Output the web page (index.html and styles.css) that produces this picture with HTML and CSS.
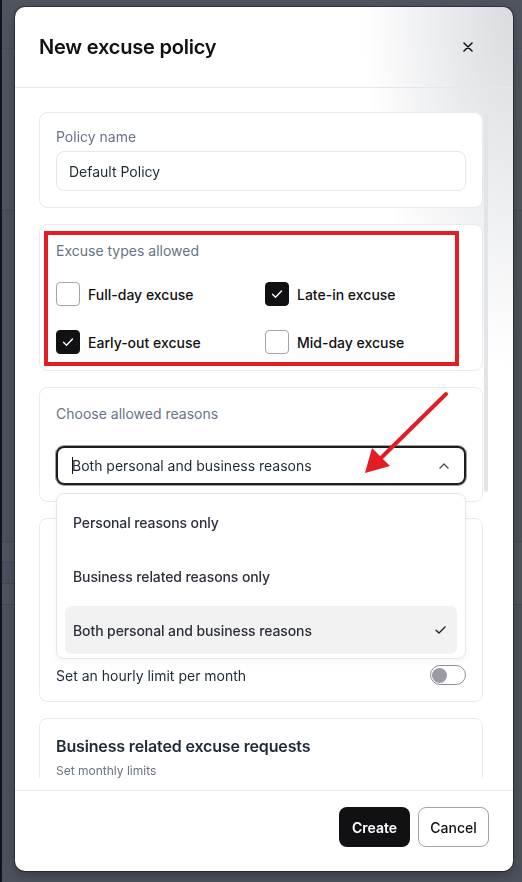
FILE: index.html
```html
<!DOCTYPE html>
<html lang="en">
<head>
    <meta charset="UTF-8">
    <meta name="viewport" content="width=device-width, initial-scale=1.0">
    <title>New excuse policy</title>
    <link rel="stylesheet" href="styles.css">
</head>
<body>
    <div class="page">
        <header class="topbar"></header>
        <section class="page-intro"></section>
        <section class="page-table">
            <div class="page-row"><span class="page-chip"></span></div>
        </section>
    </div>

    <div class="overlay">
        <div class="modal">
            <div class="modal-header">
                <h2 class="modal-title">New excuse policy</h2>
                <button class="icon-btn" aria-label="Close">
                    <svg width="10" height="10" viewBox="0 0 10 10"><path d="M1 1l8 8M9 1l-8 8" stroke="#111" stroke-width="1.5" stroke-linecap="round"/></svg>
                </button>
            </div>

            <div class="modal-body">
                <div class="scroll">
                    <div class="card">
                        <label class="field-label field-label--tight">Policy name</label>
                        <div class="text-input">Default Policy</div>
                    </div>

                    <div class="card card--annotated">
                        <div class="field-label">Excuse types allowed</div>
                        <div class="type-grid">
                            <label class="check-item"><span class="checkbox"></span>Full-day excuse</label>
                            <label class="check-item">
                                <span class="checkbox is-checked"><svg width="24" height="24" viewBox="0 0 24 24"><path d="M7.5 12.3l3 3 6-6.3" fill="none" stroke="#fff" stroke-width="1.4" stroke-linecap="round" stroke-linejoin="round"/></svg></span>
                                Late-in excuse
                            </label>
                            <label class="check-item">
                                <span class="checkbox is-checked"><svg width="24" height="24" viewBox="0 0 24 24"><path d="M7.5 12.3l3 3 6-6.3" fill="none" stroke="#fff" stroke-width="1.4" stroke-linecap="round" stroke-linejoin="round"/></svg></span>
                                Early-out excuse
                            </label>
                            <label class="check-item"><span class="checkbox"></span>Mid-day excuse</label>
                        </div>
                        <div class="annotation-box"></div>
                    </div>

                    <div class="card card--reasons">
                        <div class="field-label field-label--spaced">Choose allowed reasons</div>
                        <div class="select-wrap">
                            <div class="select">
                                <span class="select-value"><span class="caret"></span>Both personal and business reasons</span>
                                <svg width="10" height="6" viewBox="0 0 10 6"><path d="M1 5l4-4 4 4" fill="none" stroke="#4b5563" stroke-width="1.4" stroke-linecap="round" stroke-linejoin="round"/></svg>
                            </div>
                            <div class="dropdown">
                                <div class="option">Personal reasons only</div>
                                <div class="option">Business related reasons only</div>
                                <div class="option is-selected">
                                    Both personal and business reasons
                                    <svg width="11" height="8" viewBox="0 0 11 8"><path d="M1 4.2l3 2.8 6-6" fill="none" stroke="#222" stroke-width="1.4" stroke-linecap="round" stroke-linejoin="round"/></svg>
                                </div>
                            </div>
                        </div>
                        <svg class="annotation-arrow" width="90" height="90" viewBox="0 0 90 90">
                            <path d="M84 4L20 67" stroke="#e31d24" stroke-width="4" stroke-linecap="round"/>
                            <path d="M3 83L10 58L28 76Z" fill="#e31d24"/>
                        </svg>
                    </div>

                    <div class="card">
                        <div class="limit-spacer"></div>
                        <div class="toggle-row">Set an hourly limit per month<span class="switch"></span></div>
                    </div>

                    <div class="card">
                        <div class="card-title">Business related excuse requests</div>
                        <div class="card-sub">Set monthly limits</div>
                    </div>
                </div>
                <div class="scroll-thumb"></div>
            </div>

            <div class="modal-footer">
                <button class="btn btn-primary">Create</button>
                <button class="btn btn-outline">Cancel</button>
            </div>
        </div>
    </div>
</body>
</html>
```

FILE: styles.css
```css
* {
    box-sizing: border-box;
}
body {
    margin: 0;
    font-family: Inter, "Noto Sans", sans-serif;
    color: #111;
}

/* page behind the dialog */
.page {
    min-height: 100vh;
    background: #f3f4f6;
    border-left: 2px solid #0b0b0b;
}
.topbar {
    height: 49px;
    background: #fff;
    border-bottom: 1px solid #e5e7eb;
}
.page-intro {
    height: 162px;
    background: #fff;
    border-bottom: 1px solid #d1d5db;
}
.page-table {
    margin-top: 330px;
}
.page-row {
    height: 64px;
    background: #fff;
    border-top: 1px solid #d1d5db;
    border-bottom: 1px solid #d1d5db;
    display: flex;
    align-items: center;
}
.page-chip {
    width: 14px;
    height: 22px;
    background: #eef0f8;
    border: 1px solid #c5cadf;
    border-left: 0;
}

/* dialog */
.overlay {
    position: fixed;
    inset: 0;
    background: rgba(17, 24, 39, 0.74);
    display: flex;
    align-items: flex-start;
}
.modal {
    margin: 7px 0 0 15px;
    width: 498px;
    border-radius: 10px;
    background: radial-gradient(ellipse 150px 360px at 100% 0, #d9dbdf, rgba(255, 255, 255, 0)), #fff;
    box-shadow: 0 0 0 1px rgba(0, 0, 0, 0.35), 0 4px 12px rgba(0, 0, 0, 0.3);
    display: flex;
    flex-direction: column;
}
.modal-header {
    height: 81px;
    padding: 0 33px 0 24px;
    display: flex;
    align-items: center;
    justify-content: space-between;
    border-bottom: 1px solid #e5e7eb;
}
.modal-title {
    margin: 0;
    font-size: 20px;
    font-weight: 600;
    letter-spacing: -0.2px;
    color: #111;
}
.icon-btn {
    width: 24px;
    height: 24px;
    padding: 0;
    border: 0;
    background: none;
    display: flex;
    align-items: center;
    justify-content: center;
}
.modal-body {
    position: relative;
    padding: 24px 24px 12px;
}
.scroll {
    height: 666px;
    overflow: hidden;
    padding-right: 6px;
    display: flex;
    flex-direction: column;
    gap: 16px;
}
.scroll-thumb {
    position: absolute;
    top: 25px;
    right: 25px;
    width: 4px;
    height: 379px;
    border-radius: 2px;
    background: #e1e4e8;
}

.card {
    flex-shrink: 0;
    background: #fff;
    border: 1px solid #e8eaee;
    border-radius: 8px;
    padding: 16px;
}
.card--annotated {
    position: relative;
}
.card--reasons {
    position: relative;
    z-index: 2;
}
.field-label {
    display: block;
    font-size: 14px;
    line-height: 20px;
    color: #697386;
}
.field-label--tight {
    line-height: 16px;
    margin-bottom: 6px;
}
.field-label--spaced {
    margin-bottom: 22px;
}
.text-input {
    height: 40px;
    padding: 0 12px;
    border: 1px solid #e5e7eb;
    border-radius: 8px;
    display: flex;
    align-items: center;
    font-size: 14px;
    color: #1f2937;
}

.type-grid {
    margin-top: 21px;
    display: grid;
    grid-template-columns: 1fr 1fr;
    column-gap: 8px;
    row-gap: 24px;
}
.check-item {
    display: flex;
    align-items: center;
    gap: 8px;
    font-size: 14px;
    font-weight: 500;
    color: #111;
}
.checkbox {
    width: 24px;
    height: 24px;
    border: 1px solid #a0a4ad;
    border-radius: 4px;
    background: #fff;
    display: flex;
}
.checkbox.is-checked {
    background: #111113;
    border-color: #111113;
}
.checkbox svg {
    margin: -1px;
}

.annotation-box {
    position: absolute;
    left: 4px;
    top: 6px;
    width: 415px;
    height: 135px;
    border: 4px solid #e31d24;
    pointer-events: none;
}
.annotation-arrow {
    position: absolute;
    left: 322px;
    top: 2px;
    z-index: 3;
}

.select-wrap {
    position: relative;
}
.select {
    height: 39px;
    padding: 0 15px 0 14px;
    border: 2px solid #1d1d1f;
    border-radius: 8px;
    box-shadow: 0 0 0 1px #a0a0a0;
    display: flex;
    align-items: center;
    justify-content: space-between;
    font-size: 14px;
    color: #1f2937;
}
.select-value {
    display: flex;
    align-items: center;
}
.caret {
    width: 1px;
    height: 17px;
    margin-right: -1px;
    background: #111;
}
.dropdown {
    position: absolute;
    top: calc(100% + 8px);
    left: 0;
    right: 0;
    z-index: 5;
    padding: 4px 8px;
    background: #fff;
    border: 1px solid #e5e7eb;
    border-radius: 8px;
    box-shadow: 0 2px 6px rgba(0, 0, 0, 0.05);
    display: flex;
    flex-direction: column;
    gap: 6px;
}
.option {
    height: 48px;
    padding: 0 11px 0 8px;
    border-radius: 6px;
    display: flex;
    align-items: center;
    justify-content: space-between;
    font-size: 14px;
    font-weight: 500;
    letter-spacing: -0.1px;
    color: #2b303b;
}
.option.is-selected {
    background: #f2f2f3;
}

.limit-spacer {
    height: 130px;
}
.card-title {
    font-size: 16px;
    line-height: 22px;
    font-weight: 600;
    letter-spacing: -0.15px;
    color: #1f2937;
}
.card-sub {
    margin-top: 6px;
    margin-bottom: 60px;
    font-size: 12px;
    line-height: 16px;
    color: #6b7280;
}
.toggle-row {
    height: 20px;
    display: flex;
    align-items: center;
    justify-content: space-between;
    font-size: 14px;
    color: #1f2937;
}
.switch {
    width: 36px;
    height: 20px;
    border: 1.5px solid #8e8e99;
    border-radius: 10px;
    background: #fff;
    padding: 1px;
    display: flex;
    align-items: center;
}
.switch::before {
    content: "";
    width: 15px;
    height: 15px;
    border-radius: 50%;
    background: #9a9aa6;
}

.modal-footer {
    padding: 16px 24px 24px;
    border-top: 1px solid #e5e7eb;
    display: flex;
    justify-content: flex-end;
    gap: 8px;
}
.btn {
    width: 71px;
    height: 40px;
    border-radius: 8px;
    font-family: inherit;
    font-size: 14px;
    cursor: pointer;
}
.btn-primary {
    background: #111113;
    color: #fff;
    border: 0;
    font-weight: 600;
}
.btn-outline {
    background: #fff;
    color: #111;
    border: 1px solid #a3a3ad;
    font-weight: 500;
}
```
